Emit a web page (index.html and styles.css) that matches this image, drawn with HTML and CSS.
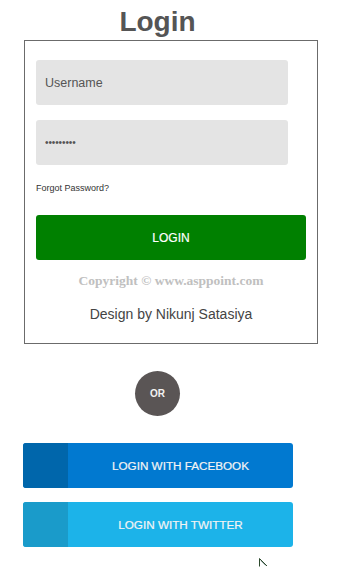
FILE: index.html
```html
<!DOCTYPE html>
<html>
<head>
<meta charset="utf-8">
<title>Login</title>
<link rel="stylesheet" href="styles.css">
</head>
<body>
<div class="page">
  <h1 class="title">Login</h1>
  <form class="card">
    <input class="field" type="text" placeholder="Username">
    <input class="field field-pass" type="password" value="password1">
    <a class="forgot" href="#">Forgot Password?</a>
    <button class="btn-login" type="button">LOGIN</button>
    <p class="copyright">Copyright © www.asppoint.com</p>
    <p class="credit">Design by Nikunj Satasiya</p>
  </form>
  <div class="or">OR</div>
  <div class="social">
    <a class="sbtn sbtn-fb" href="#"><span class="sbtn-icon"></span><span class="sbtn-text">LOGIN WITH FACEBOOK</span></a>
    <a class="sbtn sbtn-tw" href="#"><span class="sbtn-icon"></span><span class="sbtn-text">LOGIN WITH TWITTER</span></a>
  </div>
  <svg class="cursor" width="10" height="10" viewBox="0 0 10 10"><path d="M0.5 0.5 L0.5 8.5 M0.5 0.5 L8 8" stroke="#2d4a2d" stroke-width="1" fill="none"/><path d="M1.5 2.5 L6.5 7.5" stroke="#9aa" stroke-width="1"/></svg>
</div>
</body>
</html>
```
FILE: styles.css
```css
html, body {
  margin: 0;
  padding: 0;
  background: #fff;
}
body {
  font-family: "Liberation Sans", Arial, sans-serif;
}
.page {
  position: relative;
  width: 315px;
  height: 567px;
  display: flex;
  flex-direction: column;
}
.title {
  margin: 6px 0 2px;
  height: 32px;
  line-height: 32px;
  font-size: 28px;
  font-weight: bold;
  color: #555;
  text-align: center;
}
.card {
  box-sizing: border-box;
  margin: 0 0 0 24px;
  width: 294px;
  height: 304px;
  border: 1px solid #6b6b6b;
  padding: 19px 0 0 11px;
  display: flex;
  flex-direction: column;
  align-items: flex-start;
}
.field {
  box-sizing: border-box;
  width: 252px;
  height: 45px;
  margin: 0 0 15px;
  border: none;
  border-radius: 3px;
  background: #e4e4e4;
  padding: 0 9px;
  font-family: "Liberation Sans", Arial, sans-serif;
  font-size: 12.5px;
  color: #555;
  outline: none;
}
.field::placeholder {
  color: #555;
}
.field-pass {
  font-size: 10px;
  letter-spacing: -0.1px;
  color: #555;
}
.forgot {
  margin-top: 3px;
  height: 11px;
  line-height: 11px;
  font-size: 9px;
  color: #333;
  text-decoration: none;
}
.btn-login {
  margin-top: 21px;
  width: 270px;
  height: 45px;
  border: none;
  border-radius: 3px;
  background: #008000;
  color: #fff;
  font-family: "Liberation Sans", Arial, sans-serif;
  font-size: 12px;
  padding: 0;
  -webkit-text-stroke: 0.2px #fff;
}
.copyright {
  margin: 13px 0 0;
  width: 270px;
  text-align: center;
  line-height: 16px;
  font-family: "Liberation Serif", "Times New Roman", serif;
  font-weight: bold;
  font-size: 13.5px;
  color: #c0c0c0;
}
.credit {
  margin: 17px 0 0;
  width: 270px;
  text-align: center;
  line-height: 16px;
  font-size: 14px;
  color: #444;
}
.or {
  align-self: center;
  margin-top: 27px;
  width: 45px;
  height: 45px;
  border-radius: 50%;
  background: #5a5555;
  color: #f2f2f2;
  font-size: 10px;
  font-weight: bold;
  display: flex;
  align-items: center;
  justify-content: center;
}
.social {
  margin: 27px 0 0 23px;
  display: flex;
  flex-direction: column;
  gap: 14px;
}
.sbtn {
  width: 270px;
  height: 45px;
  border-radius: 3px;
  overflow: hidden;
  display: flex;
  text-decoration: none;
  color: #f4f4f4;
  font-size: 11.7px;
  -webkit-text-stroke: 0.2px #f4f4f4;
}
.sbtn-icon {
  width: 45px;
  flex: none;
}
.sbtn-text {
  flex: 1;
  display: flex;
  align-items: center;
  justify-content: center;
}
.sbtn-fb { background: #0179d0; }
.sbtn-fb .sbtn-icon { background: #0066ab; }
.sbtn-tw { background: #1cb3e9; }
.sbtn-tw .sbtn-icon { background: #1a9bca; }
.cursor {
  position: absolute;
  left: 259px;
  top: 558px;
}
```
